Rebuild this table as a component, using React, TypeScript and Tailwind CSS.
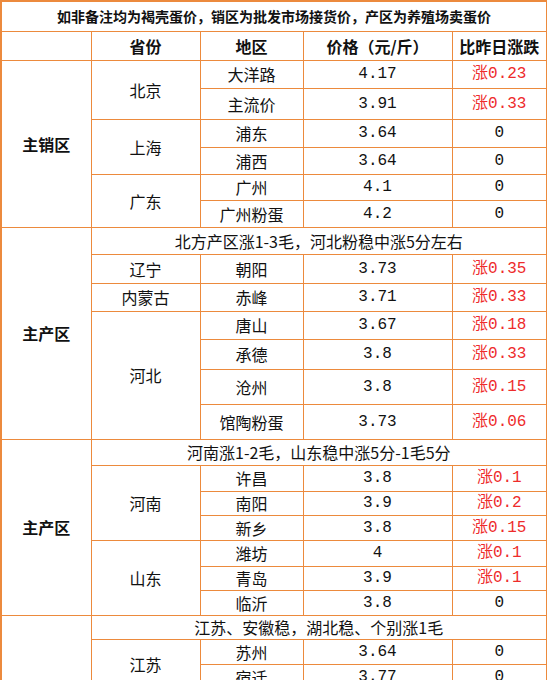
import React from 'react'

type Row = [string, string, string]
type Province = { name: string; rows: Row[] }
type Section = { label: string; note?: string; provinces: Province[] }

const sections: Section[] = [
  {
    label: '主销区',
    provinces: [
      { name: '北京', rows: [['大洋路', '4.17', '涨0.23'], ['主流价', '3.91', '涨0.33']] },
      { name: '上海', rows: [['浦东', '3.64', '0'], ['浦西', '3.64', '0']] },
      { name: '广东', rows: [['广州', '4.1', '0'], ['广州粉蛋', '4.2', '0']] },
    ],
  },
  {
    label: '主产区',
    note: '北方产区涨1-3毛，河北粉稳中涨5分左右',
    provinces: [
      { name: '辽宁', rows: [['朝阳', '3.73', '涨0.35']] },
      { name: '内蒙古', rows: [['赤峰', '3.71', '涨0.33']] },
      {
        name: '河北',
        rows: [
          ['唐山', '3.67', '涨0.18'],
          ['承德', '3.8', '涨0.33'],
          ['沧州', '3.8', '涨0.15'],
          ['馆陶粉蛋', '3.73', '涨0.06'],
        ],
      },
    ],
  },
  {
    label: '主产区',
    note: '河南涨1-2毛，山东稳中涨5分-1毛5分',
    provinces: [
      { name: '河南', rows: [['许昌', '3.8', '涨0.1'], ['南阳', '3.9', '涨0.2'], ['新乡', '3.8', '涨0.15']] },
      { name: '山东', rows: [['潍坊', '4', '涨0.1'], ['青岛', '3.9', '涨0.1'], ['临沂', '3.8', '0']] },
    ],
  },
  {
    label: '主产区',
    note: '江苏、安徽稳，湖北稳、个别涨1毛',
    provinces: [
      { name: '江苏', rows: [['苏州', '3.64', '0'], ['宿迁', '3.77', '0']] },
      { name: '安徽', rows: [['合肥', '3.7', '0']] },
      { name: '湖北', rows: [['武汉', '3.8', '涨0.1'], ['荆州', '3.7', '0']] },
    ],
  },
]

// measured row heights, top to bottom (notes included)
const heights = [28, 31, 28, 27, 26, 27, 27, 29, 28, 28, 30, 35, 35, 26, 26, 24, 25, 26, 24, 25, 24, 25, 25, 25, 25, 25]

const cjk = "font-['Noto_Sans_CJK_SC',sans-serif]"
const mono = "font-['Liberation_Mono','Noto_Sans_CJK_SC',monospace]"
const cell = 'border border-[#ec8a3d] text-center align-middle p-0'

export default function App() {
  let h = 0
  const next = () => heights[h++] ?? 25

  const body: React.ReactNode[] = []
  sections.forEach((s, si) => {
    const total = s.provinces.reduce((n, p) => n + p.rows.length, 0) + (s.note ? 1 : 0)
    let first = true
    const labelCell = (
      <td rowSpan={total} className={`${cell} text-[16px] font-bold text-[#111]`}>
        {s.label}
      </td>
    )
    if (s.note) {
      body.push(
        <tr key={`n${si}`} style={{ height: next() }}>
          {labelCell}
          <td colSpan={4} className={`${cell} text-[16px] text-[#111]`}>
            {s.note}
          </td>
        </tr>,
      )
      first = false
    }
    s.provinces.forEach((p, pi) => {
      p.rows.forEach((r, ri) => {
        body.push(
          <tr key={`${si}-${pi}-${ri}`} style={{ height: next() }}>
            {first && labelCell}
            {ri === 0 && (
              <td rowSpan={p.rows.length} className={`${cell} text-[16px] text-[#111]`}>
                {p.name}
              </td>
            )}
            <td className={`${cell} text-[16px] text-[#111]`}>{r[0]}</td>
            <td className={`${cell} ${mono} text-[16px] text-[#111]`}>{r[1]}</td>
            <td className={`${cell} ${mono} text-[16px] ${r[2].startsWith('涨') ? 'text-[#ee2b2b]' : 'text-[#111]'}`}>
              {r[2]}
            </td>
          </tr>,
        )
        first = false
      })
    })
  })

  return (
    <div className={`min-h-screen w-[547px] bg-white ${cjk}`}>
      <table className="w-[546px] table-fixed border-collapse border-2 border-[#ec8a3d] leading-none">
        <colgroup>
          <col className="w-[90px]" />
          <col className="w-[109px]" />
          <col className="w-[103px]" />
          <col className="w-[149px]" />
          <col className="w-[95px]" />
        </colgroup>
        <tbody>
          <tr className="h-[30px]">
            <td colSpan={5} className={`${cell} text-[14px] font-bold text-[#111]`}>
              如非备注均为褐壳蛋价，销区为批发市场接货价，产区为养殖场卖蛋价
            </td>
          </tr>
          <tr className="h-[29px]">
            <td className={cell}></td>
            <td className={`${cell} text-[16px] font-bold text-[#111]`}>省份</td>
            <td className={`${cell} text-[16px] font-bold text-[#111]`}>地区</td>
            <td className={`${cell} text-[16px] font-bold text-[#111]`}>价格（元/斤）</td>
            <td className={`${cell} text-[16px] font-bold text-[#111]`}>比昨日涨跌</td>
          </tr>
          {body}
        </tbody>
      </table>
    </div>
  )
}
